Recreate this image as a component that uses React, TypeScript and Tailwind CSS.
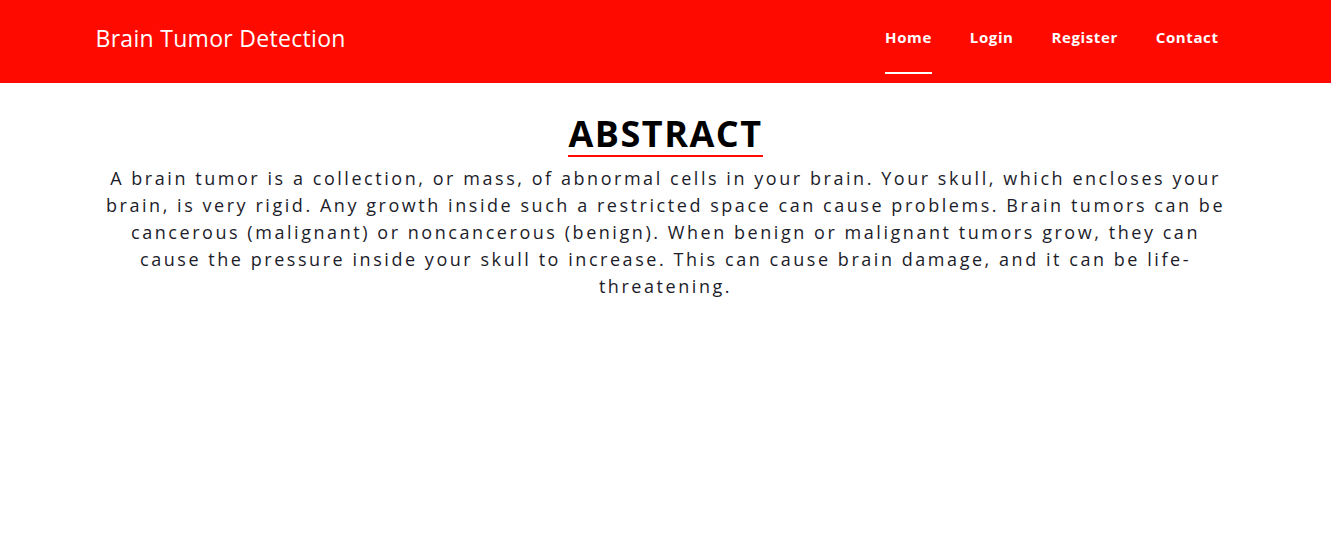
import React from "react";

const navLinks = ["Home", "Login", "Register", "Contact"];

const Header = () => {
  return (
    <nav className="bg-[#ff0a00] h-[83px] flex">
      <div className="w-[1140px] mx-auto flex items-center justify-between">
        <a className="text-white text-[23px] pl-[0px] pb-[7px] tracking-[0.3px]">Brain Tumor Detection</a>
        <div className="flex gap-[38px] pr-[17px] self-stretch">
          {navLinks.map((link, index) => (
            <a
              key={link}
              className={
                "text-white font-bold text-[15px] tracking-[0.6px] flex items-start pt-[26px] border-b-2 h-[74px] " +
                (index === 0 ? "border-white" : "border-transparent")
              }
            >
              {link}
            </a>
          ))}
        </div>
      </div>
    </nav>
  );
};

const App = () => {
  return (
    <div className="min-h-[559px] bg-white font-['Open_Sans',sans-serif]">
      <Header />
      <section className="w-[1140px] mx-auto text-center pt-[30px]">
        <h1 className="inline-block text-[36px] font-bold text-black leading-[42px] border-b-2 border-[#ff0a00] tracking-[1.5px]">
          ABSTRACT
        </h1>
        <p className="text-[18px] leading-[27px] tracking-[2.55px] text-[#1c1c2a] mt-[8px] px-[4px]">
          A brain tumor is a collection, or mass, of abnormal cells in your brain. Your skull, which encloses your
          brain, is very rigid. Any growth inside such a restricted space can cause problems. Brain tumors can be
          cancerous (malignant) or noncancerous (benign). When benign or malignant tumors grow, they can cause the
          pressure inside your skull to increase. This can cause brain damage, and it can be life-threatening.
        </p>
      </section>
    </div>
  );
};

export default App;
